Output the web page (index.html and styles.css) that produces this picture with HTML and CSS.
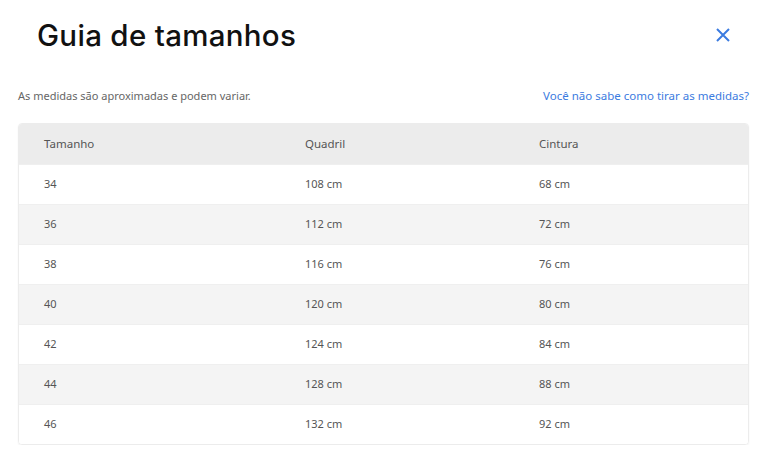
FILE: index.html
```html
<!DOCTYPE html>
<html>
<head>
<meta charset="utf-8">
<title>Guia de tamanhos</title>
<link rel="stylesheet" href="styles.css">
</head>
<body>
<div class="modal">
	<div class="modal-head">
		<h1>Guia de tamanhos</h1>
		<a class="close" href="#" title="Fechar">
			<svg width="14" height="14" viewBox="0 0 14 14"><path d="M1 1L13 13M13 1L1 13" stroke="#3b7be0" stroke-width="2" fill="none"/></svg>
		</a>
	</div>
	<div class="note">
		<span>As medidas são aproximadas e podem variar.</span>
		<a href="#">Você não sabe como tirar as medidas?</a>
	</div>
	<div class="sizes">
		<div class="row head"><div>Tamanho</div><div>Quadril</div><div>Cintura</div></div>
		<div class="row"><div>34</div><div>108 cm</div><div>68 cm</div></div>
		<div class="row"><div>36</div><div>112 cm</div><div>72 cm</div></div>
		<div class="row"><div>38</div><div>116 cm</div><div>76 cm</div></div>
		<div class="row"><div>40</div><div>120 cm</div><div>80 cm</div></div>
		<div class="row"><div>42</div><div>124 cm</div><div>84 cm</div></div>
		<div class="row"><div>44</div><div>128 cm</div><div>88 cm</div></div>
		<div class="row"><div>46</div><div>132 cm</div><div>92 cm</div></div>
	</div>
</div>
</body>
</html>
```
FILE: styles.css
```css
body {
	margin: 0;
	background: #fff;
	font-family: "Noto Sans", "Liberation Sans", sans-serif;
	color: #555;
}

.modal {
	padding: 0 14px 0 18px;
}

.modal-head {
	display: flex;
	align-items: center;
	justify-content: space-between;
	height: 70px;
	padding: 0 19px 0 19px;
}

.modal-head h1 {
	margin: 0;
	font-family: Inter, "Noto Sans", sans-serif;
	font-weight: 500;
	font-size: 29.5px;
	color: #111;
	letter-spacing: 0.3px;
}

.close {
	display: flex;
	width: 14px;
	height: 14px;
}

.note {
	display: flex;
	justify-content: space-between;
	align-items: center;
	height: 51px;
	padding-bottom: 2px;
	font-size: 11px;
}

.note span {
	color: #666;
}

.note a {
	color: #3b7be0;
	text-decoration: none;
	font-size: 11.5px;
}

.sizes {
	border: 1px solid #ececec;
	border-radius: 4px;
	overflow: hidden;
	box-shadow: 0 1px 2px rgba(0,0,0,0.06);
	font-size: 11px;
}

.row {
	display: grid;
	grid-template-columns: 261px 234px 1fr;
	height: 40px;
	padding-bottom: 2px;
	align-items: center;
	background: #fff;
	border-top: 1px solid #efefef;
	box-sizing: border-box;
}

.row:nth-child(odd) {
	background: #f4f4f4;
}

.row div {
	padding-left: 25px;
}

.row.head {
	background: #ececec;
	border-top: none;
	color: #555;
	font-size: 11.5px;
}
```
